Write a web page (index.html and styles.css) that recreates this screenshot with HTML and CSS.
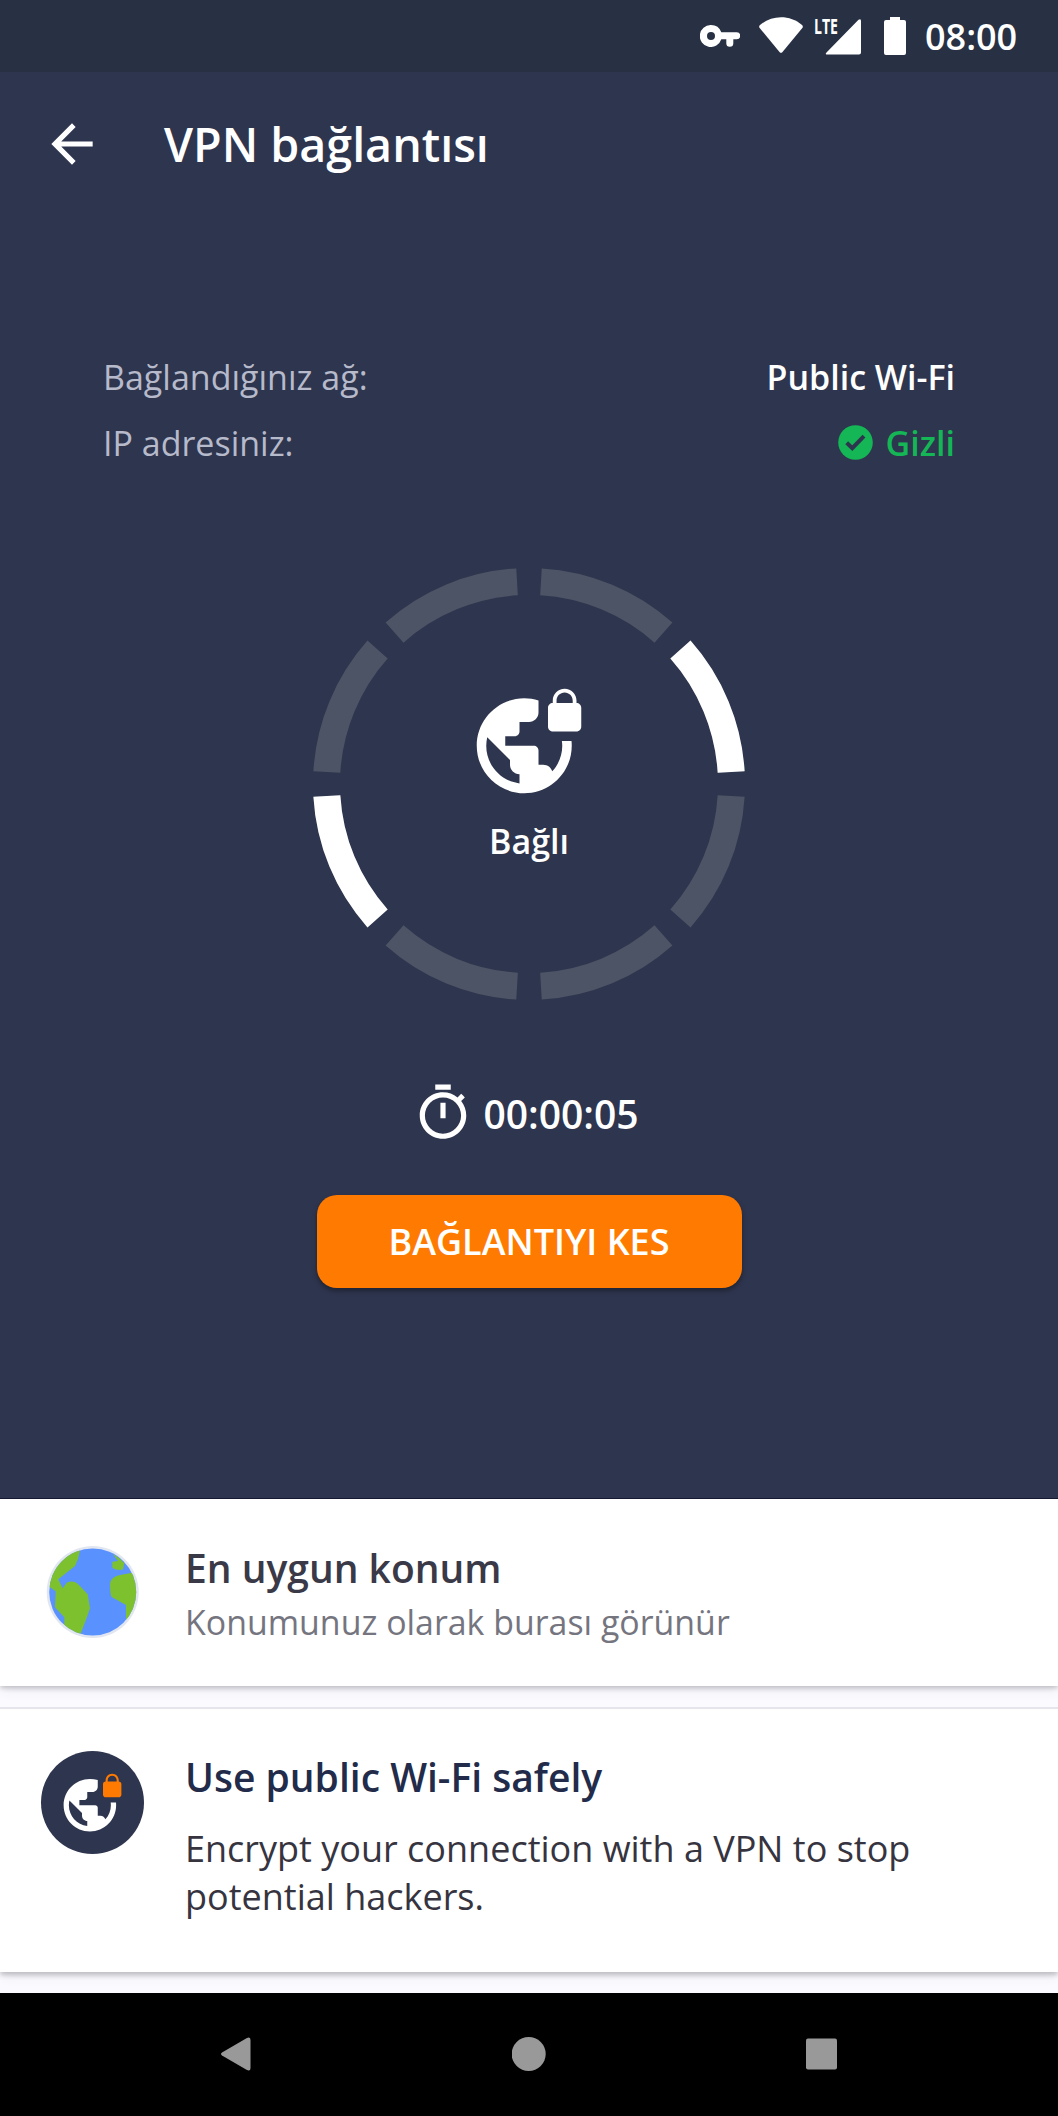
FILE: index.html
```html
<!DOCTYPE html>
<html lang="tr">
<head>
    <meta charset="UTF-8">
    <title>VPN bağlantısı</title>
    <link rel="stylesheet" href="styles.css">
</head>
<body>
    <svg class="defs">
        <symbol id="globe" viewBox="0 0 24 24">
            <path d="M18.92 12c.04.33.08.66.08 1 0 2.08-.8 3.97-2.1 5.39-.26-.81-1-1.39-1.9-1.39h-1v-3c0-.55-.45-1-1-1H7v-2h2c.55 0 1-.45 1-1V8h2c1.1 0 2-.9 2-2V3.46c-.95-.3-1.95-.46-3-.46C5.48 3 1 7.48 1 13s4.48 10 10 10 10-4.48 10-10c0-.34-.02-.67-.05-1h-2.03zM10 20.93c-3.95-.49-7-3.85-7-7.93 0-.62.08-1.21.21-1.79L8 16v1c0 1.1.9 2 2 2v1.93z"/>
        </symbol>
        <symbol id="lock" viewBox="0 0 24 24">
            <path d="M22 4v-.5C22 2.12 20.88 1 19.5 1S17 2.12 17 3.5V4c-.55 0-1 .45-1 1v4c0 .55.45 1 1 1h5c.55 0 1-.45 1-1V5c0-.55-.45-1-1-1zm-.8 0h-3.4v-.5c0-.94.76-1.7 1.7-1.7s1.7.76 1.7 1.7V4z"/>
        </symbol>
    </svg>

    <div class="statusbar">
        <svg class="key" viewBox="0 0 40 22">
            <path fill-rule="evenodd" d="M11 0a11 11 0 0 1 10.3 7.3H36.7a3.5 3.5 0 0 1 0 7H33.3V18.3a3.5 3.5 0 0 1-7 0V14.3H21.3A11 11 0 1 1 11 0zM11 7a4 4 0 1 0 0 8a4 4 0 0 0 0-8z"/>
        </svg>
        <svg class="wifi" viewBox="0 0 44 36">
            <path d="M1 8C13-2.300 31-2.300 43 8q1.500 1.500.300 3L23.300 35.200q-1.300 1.200-2.600 0L.700 11Q-.500 9.500 1 8z"/>
        </svg>
        <svg class="signal" viewBox="0 0 46 38">
            <text x="-1" y="17.300" textLength="24" lengthAdjust="spacingAndGlyphs">LTE</text>
            <path d="M43.500 2.800Q46 1 46 4V35.500q0 2-2 2H12.500q-3 0-1-2z"/>
        </svg>
        <svg class="battery" viewBox="0 0 22 38">
            <path d="M6 0H16V3H20q2 0 2 2V36q0 2-2 2H2q-2 0-2-2V5q0-2 2-2H6z"/>
        </svg>
        <span class="clock">08:00</span>
    </div>

    <div class="vpn">
        <div class="appbar">
            <svg class="back" viewBox="0 0 24 24">
                <path d="M20 11H7.830l5.590-5.590L12 4l-8 8 8 8 1.410-1.410L7.830 13H20v-2z"/>
            </svg>
            <h1>VPN bağlantısı</h1>
        </div>

        <div class="details">
            <div class="row">
                <span>Bağlandığınız ağ:</span>
                <span class="value">Public Wi-Fi</span>
            </div>
            <div class="row">
                <span>IP adresiniz:</span>
                <span class="value hidden">
                    <svg class="check" viewBox="0 0 35 35">
                        <circle cx="17.500" cy="17.500" r="17.300"/>
                        <path d="M8.700 17.800L14.300 23.200L26 11.200"/>
                    </svg>
                    <span>Gizli</span>
                </span>
            </div>
        </div>

        <div class="ring">
            <svg class="segments" viewBox="0 0 432 432">
                <circle class="track" cx="216" cy="216" r="202.500" pathLength="360"/>
                <circle class="active" cx="216" cy="216" r="202.500" pathLength="360"/>
            </svg>
            <svg class="globe"><use href="#globe"/><use href="#lock"/></svg>
            <span class="state">Bağlı</span>
        </div>

        <div class="timer">
            <svg viewBox="0 0 24 24">
                <path d="M15 1H9v2h6V1zm-4 13h2V8h-2v6zm8.030-6.610l1.420-1.420c-.43-.51-.9-.99-1.410-1.410l-1.420 1.420C16.070 4.740 14.120 4 12 4c-4.970 0-9 4.030-9 9s4.020 9 9 9 9-4.030 9-9c0-2.120-.74-4.070-1.970-5.610zM12 20c-3.870 0-7-3.130-7-7s3.130-7 7-7 7 3.130 7 7-3.130 7-7 7z"/>
            </svg>
            <span>00:00:05</span>
        </div>

        <button class="disconnect">BAĞLANTIYI KES</button>
    </div>

    <div class="cards">
        <div class="card location">
            <svg class="icon" viewBox="0 0 103 92">
                <clipPath id="earth"><circle cx="51.700" cy="46" r="43.500"/></clipPath>
                <circle class="halo" cx="51.700" cy="46" r="46"/>
                <g clip-path="url(#earth)">
                    <path class="sea" d="M0 0H103V92H0z"/>
                    <path class="land" d="M0 0H40L37 13L34 20L17.300 33.300L21.700 42.300L25.700 36.700Q32 34 37 38L46.700 48.300L49 62.300L46 71L38 92H23.300V71.300L14 61.300L14.700 45.300L8 40.500L0 40z"/>
                    <path class="land" d="M71.700 8L77 15L71.300 15.700V21.700Q76 25 82 23.500L83.300 17.300L78 12z"/>
                    <path class="land" d="M103 25L90 27L79 29Q69.500 31 69 38Q69 50 71 51.300L85 59V78L103 76z"/>
                </g>
            </svg>
            <div>
                <h2>En uygun konum</h2>
                <p class="hint">Konumunuz olarak burası görünür</p>
            </div>
        </div>
        <div class="card promo">
            <div class="icon badge">
                <svg><use href="#globe"/><use class="orange" href="#lock"/></svg>
            </div>
            <div>
                <h2>Use public Wi-Fi safely</h2>
                <p class="text">Encrypt your connection with a VPN to stop<br>potential hackers.</p>
            </div>
        </div>
    </div>

    <div class="navbar">
        <svg viewBox="0 0 34 34"><path d="M27.500 1.200Q31.500-1 31.500 3V31q0 4-4 1.800L3 18.500Q1 17 3 15.500z"/></svg>
        <svg viewBox="0 0 34 34"><circle cx="16.700" cy="17" r="17"/></svg>
        <svg viewBox="0 0 34 34"><rect x="1" y="1.500" width="31" height="31" rx="2"/></svg>
    </div>
</body>
</html>
```
FILE: styles.css
```css
* {
    box-sizing: border-box;
}

body {
    margin: 0;
    font-family: "Open Sans", sans-serif;
    background-color: #fbfbff;
    color: #fff;
}

h1, h2, p {
    margin: 0;
    font-weight: 400;
}

svg {
    display: block;
    fill: currentColor;
    flex: none;
}

.defs {
    display: none;
}

.statusbar {
    display: flex;
    align-items: center;
    height: 72px;
    padding: 0 41px 0 700px;
    background-color: #283144;
}

.key {
    width: 40px;
    height: 22px;
}

.wifi {
    width: 44px;
    height: 36px;
    margin: 0 12px 2px 19px;
}

.signal {
    width: 46px;
    height: 38px;
    overflow: visible;
    font-size: 22px;
    font-weight: 700;
}

.battery {
    width: 22px;
    height: 38px;
    margin: 0 19px 0 23px;
}

.clock {
    font-size: 36px;
    font-weight: 600;
}

.vpn {
    height: 1427px;
    background-color: #2e354e;
    border-bottom: 1px solid #151a30;
}

.appbar {
    display: flex;
    align-items: center;
    height: 144px;
    padding-left: 41px;
}

.back {
    width: 62px;
    height: 62px;
    margin-right: 61px;
}

h1 {
    padding-bottom: 1px;
    font-size: 46.6px;
    line-height: 62px;
    font-weight: 600;
}

.details {
    margin: 128px 103px 92px;
    font-size: 34px;
    line-height: 66px;
    color: #b6bacb;
}

.row {
    display: flex;
    justify-content: space-between;
}

.value {
    color: #fff;
    font-weight: 600;
}

.hidden {
    display: flex;
    align-items: center;
    gap: 13px;
    color: #14b655;
}

.check {
    width: 35px;
    height: 35px;
    margin-bottom: 2px;
}

.check path {
    fill: none;
    stroke: #2e354e;
    stroke-width: 4;
}

.ring {
    position: relative;
    display: flex;
    flex-direction: column;
    align-items: center;
    width: 432px;
    height: 432px;
    margin: 0 auto 82px;
    padding-top: 116px;
}

.segments {
    position: absolute;
    top: 0;
    left: 0;
    width: 432px;
    height: 432px;
    fill: none;
    stroke-width: 27;
}

.track {
    stroke: #4d5466;
    stroke-dasharray: 38.2 6.8;
    stroke-dashoffset: -3.4;
}

.active {
    stroke: #fff;
    stroke-dasharray: 38.2 141.8;
    stroke-dashoffset: -138.4;
}

.globe {
    width: 114px;
    height: 114px;
}

.state {
    margin-top: 19px;
    font-size: 34px;
    line-height: 48px;
    font-weight: 600;
}

.timer {
    display: flex;
    align-items: center;
    justify-content: center;
    gap: 9px;
    height: 62px;
    margin-bottom: 51px;
    padding-right: 7px;
    font-size: 39px;
    font-weight: 600;
}

.timer svg {
    width: 62px;
    height: 62px;
}

.disconnect {
    display: block;
    width: 425px;
    height: 93px;
    margin: 0 auto;
    padding: 0;
    border: 0;
    border-radius: 20px;
    background-color: #ff7a00;
    box-shadow: 0 3px 5px rgba(0, 0, 0, 0.35);
    font: 600 36px "Open Sans", sans-serif;
    color: #fff;
}

.cards {
    height: 494px;
    overflow: hidden;
}

.card {
    display: flex;
    gap: 41px;
    padding-left: 41px;
    background-color: #fff;
    box-shadow: 0 2px 5px rgba(0, 0, 0, 0.22), 0 8px 10px -2px rgba(20, 20, 60, 0.06);
}

.icon {
    width: 103px;
}

.location {
    height: 187px;
    padding-top: 43px;
    color: #3a3947;
}

.location .icon {
    height: 92px;
    margin-top: 4px;
}

.halo {
    fill: #e1e6f0;
}

.sea {
    fill: #5991ff;
}

.land {
    fill: #7dc12f;
}

h2 {
    font-size: 39px;
    line-height: 52px;
    font-weight: 600;
}

.hint {
    margin-top: 4px;
    font-size: 33.9px;
    line-height: 48px;
    color: #75757f;
}

.promo {
    height: 265px;
    margin-top: 21px;
    padding-top: 42px;
    border-top: 2px solid #e5e5eb;
    box-shadow: 0 3px 5px rgba(0, 0, 0, 0.22), 0 8px 10px -2px rgba(20, 20, 60, 0.06);
    clip-path: inset(0 0 -30px);
    color: #222c4a;
}

.badge {
    display: flex;
    align-items: center;
    justify-content: center;
    height: 103px;
    border-radius: 50%;
    background-color: #2e354e;
    color: #fff;
}

.badge svg {
    width: 63px;
    height: 63px;
}

.orange {
    fill: #ff7a00;
}

.text {
    margin-top: 22px;
    font-size: 36px;
    line-height: 48px;
    color: #36343f;
}

.navbar {
    display: flex;
    justify-content: space-between;
    height: 123px;
    padding: 44px 219px 0;
    background-color: #000;
    color: #999;
}

.navbar svg {
    width: 34px;
    height: 34px;
}
```
